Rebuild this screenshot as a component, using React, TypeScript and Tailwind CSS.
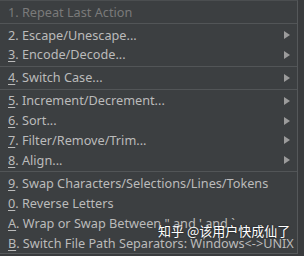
import React from "react";

type Item = { key: string; label: string; sub?: boolean; disabled?: boolean; underline?: boolean } | { sep: true };

const items: Item[] = [
  { key: "1", label: ". Repeat Last Action", disabled: true },
  { sep: true },
  { key: "2", label: ". Escape/Unescape...", sub: true },
  { key: "3", label: ". Encode/Decode...", sub: true, underline: true },
  { sep: true },
  { key: "4", label: ". Switch Case...", sub: true, underline: true },
  { sep: true },
  { key: "5", label: ". Increment/Decrement...", sub: true, underline: true },
  { key: "6", label: ". Sort...", sub: true, underline: true },
  { key: "7", label: ". Filter/Remove/Trim...", sub: true, underline: true },
  { key: "8", label: ". Align...", sub: true, underline: true },
  { sep: true },
  { key: "9", label: ". Swap Characters/Selections/Lines/Tokens", underline: true },
  { key: "0", label: ". Reverse Letters", underline: true },
  { key: "A", label: ". Wrap or Swap Between \" and ' and `", underline: true },
  { key: "B", label: ". Switch File Path Separators: Windows<->UNIX", underline: true },
];

function Arrow() {
  return (
    <svg width="6" height="8" viewBox="0 0 6 8" className="shrink-0">
      <polygon points="0,0 6,4 0,8" fill="#9b9b9b" />
    </svg>
  );
}

export default function App() {
  return (
    <div
      className="relative w-[304px] h-[256px] overflow-hidden bg-[#393b3d]"
      style={{ fontFamily: '"Noto Sans", "Noto Sans CJK SC", sans-serif' }}
    >
      <div className="w-[298px] h-[254px] bg-[#3c3f41] border-t border-t-[#4b4e50] border-r border-b border-[#55585a] pt-[1px] flex flex-col">
        {items.map((it, i) =>
          "sep" in it ? (
            <div key={i} className="h-[3px] flex items-center">
              <div className="w-full h-px bg-[#525557]" />
            </div>
          ) : (
            <div key={i} className="h-5 flex items-center pl-2 pr-[7px] text-[12.7px] leading-none">
              <span className={`flex-1 whitespace-nowrap ${it.disabled ? "text-[#7a7a7a]" : "text-[#bbbbbb]"}`}>
                <span className={it.underline ? "underline underline-offset-2" : ""}>{it.key}</span>
                {it.label}
              </span>
              {it.sub && <Arrow />}
            </div>
          )
        )}
      </div>
      <div
        className="absolute left-[158px] top-[224px] text-[13px] leading-none text-white whitespace-nowrap"
        style={{ fontFamily: '"Noto Sans CJK SC", sans-serif', textShadow: "0 0 2px rgba(0,0,0,0.6)" }}
      >
        知乎 @该用户快成仙了
      </div>
    </div>
  );
}
